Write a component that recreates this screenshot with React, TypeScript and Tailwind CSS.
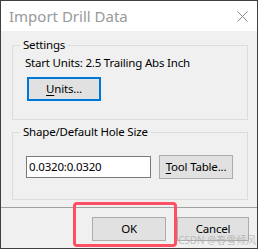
import React from "react";

const font = { fontFamily: '"Noto Sans", "Noto Sans CJK SC", sans-serif' };

export default function App() {
  return (
    <div
      className="relative w-[258px] h-[249px] border border-[#404040] bg-[#f0f0f0] flex flex-col text-[11.5px] tracking-[-0.2px] text-black overflow-hidden"
      style={font}
    >
      {/* Title bar */}
      <div className="h-[30px] bg-white flex items-center justify-between pl-[8px] pr-[9px] shrink-0">
        <span className="text-[15px] text-[#999999] leading-none tracking-normal">Import Drill Data</span>
        <svg width="11" height="11" viewBox="0 0 11 11">
          <path d="M0.5 0.5 L10.5 10.5 M10.5 0.5 L0.5 10.5" stroke="#8a8a8a" strokeWidth="1" />
        </svg>
      </div>

      {/* Body */}
      <div className="flex flex-col pl-[11px] pr-[9px] pt-[6px]">
        <fieldset className="border border-[#dcdcdc] w-[236px] p-0 m-0 pb-[18px]">
          <legend className="ml-[7px] px-[3px] leading-[16px]">Settings</legend>
          <div className="pl-[12px] pt-[2px] leading-[16px]">Start Units: 2.5 Trailing Abs Inch</div>
          <button className="ml-[14px] mt-[6px] w-[74px] h-[24px] border-2 border-[#0078d7] bg-[#e1e1e1] leading-none flex items-center justify-center">
            <span><span className="underline underline-offset-2">U</span>nits...</span>
          </button>
        </fieldset>

        <fieldset className="border border-[#dcdcdc] w-[236px] p-0 m-0 mt-[4px] pb-[20px]">
          <legend className="ml-[7px] px-[3px] leading-[16px]">Shape/Default Hole Size</legend>
          <div className="flex items-center pl-[13px] pt-[15px]">
            <div className="w-[125px] h-[22px] border border-[#7a7a7a] bg-white flex items-center pl-[2px] leading-none">
              0.0320:0.0320
            </div>
            <button className="ml-[8px] w-[74px] h-[24px] border border-[#adadad] bg-[#e1e1e1] leading-none flex items-center justify-center">
              <span><span className="underline underline-offset-2">T</span>ool Table...</span>
            </button>
          </div>
        </fieldset>
      </div>

      {/* Separator */}
      <div className="mt-[7px] h-[1px] bg-[#a0a0a0] shrink-0" />

      {/* Bottom buttons */}
      <div className="flex justify-end gap-[11px] pr-[8px] pt-[9px]">
        <button className="w-[74px] h-[24px] border border-[#adadad] bg-[#e1e1e1] leading-none flex items-center justify-center">
          OK
        </button>
        <button className="w-[72px] h-[24px] border border-[#adadad] bg-[#e1e1e1] leading-none flex items-center justify-center">
          Cancel
        </button>
      </div>

      {/* Annotation overlay */}
      <div className="absolute left-[72px] top-[201px] w-[104px] h-[45px] border-[3px] border-[#fd5064] rounded-[4px] pointer-events-none" />

      {/* Watermark */}
      <div className="absolute left-[177px] top-[234px] text-[10px] leading-none tracking-normal text-[#a8a8a8]/70 pointer-events-none whitespace-nowrap">
        CSDN @春雪倾风
      </div>
    </div>
  );
}
